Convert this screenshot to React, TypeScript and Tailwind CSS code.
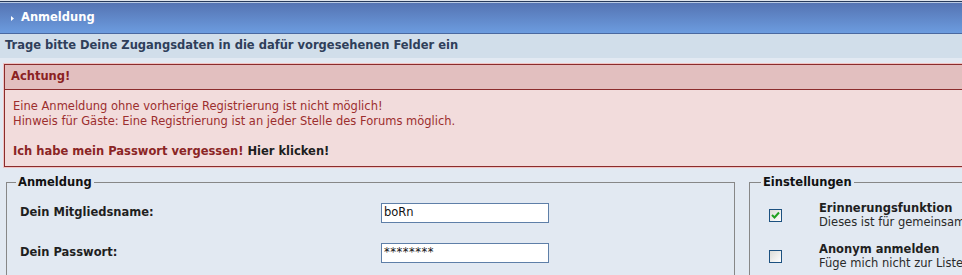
export default function App() {
  return (
    <div className="w-[962px] h-[275px] overflow-hidden bg-[#e2e9f2] font-['DejaVu_Sans',Verdana,sans-serif] text-[11.5px]">
      {/* Kopfleiste */}
      <div className="h-px bg-[#dfe4ec]" />
      <div className="h-px bg-[#27395a]" />
      <div className="h-px bg-[#b9c9e2]" />
      <div className="h-[30px] bg-gradient-to-b from-[#5574b3] to-[#6c9cdf] flex items-center pl-[11px] gap-[7px]">
        <svg width="3" height="5" viewBox="0 0 3 5" className="mt-px">
          <path d="M0 0 L3 2.5 L0 5 Z" fill="#ffffff" />
        </svg>
        <span className="font-bold text-white leading-none">Anmeldung</span>
      </div>
      <div className="h-px bg-[#4a69a0]" />

      <div className="h-[24px] bg-[#d1deea] flex items-center px-[5px]">
        <span className="font-bold text-[#2f3f5a]">Trage bitte Deine Zugangsdaten in die dafür vorgesehenen Felder ein</span>
      </div>

      {/* Hinweis */}
      <div className="mt-[6px] ml-[4px] w-[980px] border border-[#8b2c2c] shadow-[inset_0_0_0_1px_#f2b8b8,0_0_0_1px_#f0c4c4]">
        <div className="h-[25px] bg-[#e2bfbf] border-b border-[#8b2c2c] flex items-center px-[6px]">
          <span className="font-bold text-[#8b2222]">Achtung!</span>
        </div>
        <div className="bg-[#f2dcdc] pt-[9px] pb-[7px] px-[8px] leading-[15px] text-[#9c2e2e]">
          <div>Eine Anmeldung ohne vorherige Registrierung ist nicht möglich!</div>
          <div>Hinweis für Gäste: Eine Registrierung ist an jeder Stelle des Forums möglich.</div>
          <div className="h-[15px]" />
          <div className="font-bold">
            <span className="text-[#8b2525]">Ich habe mein Passwort vergessen! </span>
            <span className="text-[#1e1e1e]">Hier klicken!</span>
          </div>
        </div>
      </div>

      {/* Formular */}
      <div className="flex gap-[14px] pl-[6px] mt-[8px]">
        <fieldset className="w-[729px] h-[120px] shrink-0 border border-[#878787] px-[13px] pt-[14px]">
          <legend className="ml-[-4px] px-[2px] font-bold text-[#111] leading-[14px]">Anmeldung</legend>
          <div className="flex flex-col gap-[20px]">
            <div className="flex items-center h-[20px]">
              <span className="w-[361px] font-bold text-[#1f1f1f]">Dein Mitgliedsname:</span>
              <div className="w-[168px] h-[20px] bg-white border border-[#5e7fa8] flex items-center px-[2px] text-[#111]">boRn</div>
            </div>
            <div className="flex items-center h-[20px]">
              <span className="w-[361px] font-bold text-[#1f1f1f]">Dein Passwort:</span>
              <div className="w-[168px] h-[20px] bg-white border border-[#5e7fa8] flex items-center px-[2px] text-[#111] tracking-[0.5px]">********</div>
            </div>
          </div>
        </fieldset>

        <fieldset className="w-[400px] h-[120px] shrink-0 border border-[#878787] pl-[19px] pt-[12px]">
          <legend className="ml-[-8px] px-[2px] font-bold text-[#111] leading-[14px]">Einstellungen</legend>
          <div className="flex flex-col gap-[13px]">
            <div className="flex items-center">
              <div className="w-[13px] h-[13px] border border-[#1c5180] bg-gradient-to-br from-[#dcdcd7] to-[#ffffff] flex items-center justify-center">
                <svg width="9" height="8" viewBox="0 0 9 8">
                  <path d="M1 4 L3.5 6.5 L8 1.5" stroke="#21a121" strokeWidth="2" fill="none" />
                </svg>
              </div>
              <div className="ml-[37px] leading-[14px]">
                <div className="font-bold text-[#1f1f1f] whitespace-nowrap">Erinnerungsfunktion</div>
                <div className="text-[#2a2a2a] whitespace-nowrap">Dieses ist für gemeinsam genutzte Computer nicht empfohlen</div>
              </div>
            </div>
            <div className="flex items-center">
              <div className="w-[13px] h-[13px] border border-[#1c5180] bg-gradient-to-br from-[#dcdcd7] to-[#ffffff]" />
              <div className="ml-[37px] leading-[14px]">
                <div className="font-bold text-[#1f1f1f] whitespace-nowrap">Anonym anmelden</div>
                <div className="text-[#2a2a2a] whitespace-nowrap">Füge mich nicht zur Liste der aktiven Benutzer hinzu</div>
              </div>
            </div>
          </div>
        </fieldset>
      </div>
    </div>
  );
}
